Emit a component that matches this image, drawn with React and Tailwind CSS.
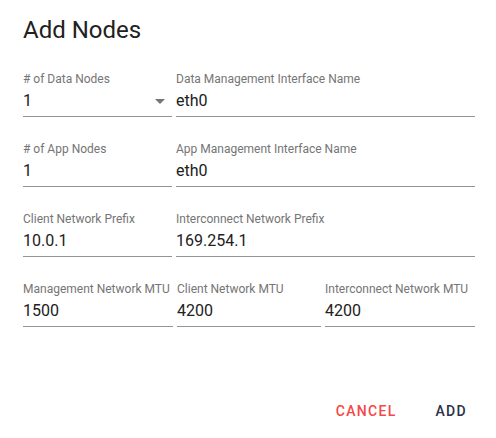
import { useState } from "react";

const Field = ({ label, value, width, select }) => (
    <div className={`flex flex-col h-12 shrink-0 ${width}`}>
        <div className="h-4 pt-[4px] text-[12px] leading-[12px] text-[#757575] whitespace-nowrap">{label}</div>
        <div className="relative h-8 pt-[6px] pb-[7px] border-b border-[#949494] text-[16px] leading-[19px] text-[#212121]">
            {value}
            {select && (
                <svg viewBox="0 0 24 24" className="absolute right-0 top-1 w-6 h-6 fill-[#757575]">
                    <path d="M7 10l5 5 5-5z" />
                </svg>
            )}
        </div>
    </div>
);

const App = () => {
    const [dataNodes] = useState("1");

    return (
        <div className="w-[496px] h-[438px] bg-white flex flex-col font-['Roboto',sans-serif]">
            <h2 className="pt-[14px] pl-[23px] text-[24px] leading-8 font-normal text-[#212121]">Add Nodes</h2>

            <div className="flex flex-col gap-[22px] pl-[23px] mt-[23px]">
                <div className="flex gap-[4px]">
                    <Field label="# of Data Nodes" value={dataNodes} width="w-[149px]" select />
                    <Field label="Data Management Interface Name" value="eth0" width="w-[299px]" />
                </div>
                <div className="flex gap-[4px]">
                    <Field label="# of App Nodes" value="1" width="w-[149px]" />
                    <Field label="App Management Interface Name" value="eth0" width="w-[299px]" />
                </div>
                <div className="flex gap-[4px]">
                    <Field label="Client Network Prefix" value="10.0.1" width="w-[149px]" />
                    <Field label="Interconnect Network Prefix" value="169.254.1" width="w-[299px]" />
                </div>
                <div className="flex gap-[4px]">
                    <Field label="Management Network MTU" value="1500" width="w-[150px]" />
                    <Field label="Client Network MTU" value="4200" width="w-[144px]" />
                    <Field label="Interconnect Network MTU" value="4200" width="w-[150px]" />
                </div>
            </div>

            <div className="mt-auto mb-[15px] flex justify-end items-center pr-[29px] gap-[39px] text-[14px] leading-6 font-medium tracking-[1.3px]">
                <button className="text-[#f44848]">CANCEL</button>
                <button className="text-[#2c3147]">ADD</button>
            </div>
        </div>
    );
};

export default App;
